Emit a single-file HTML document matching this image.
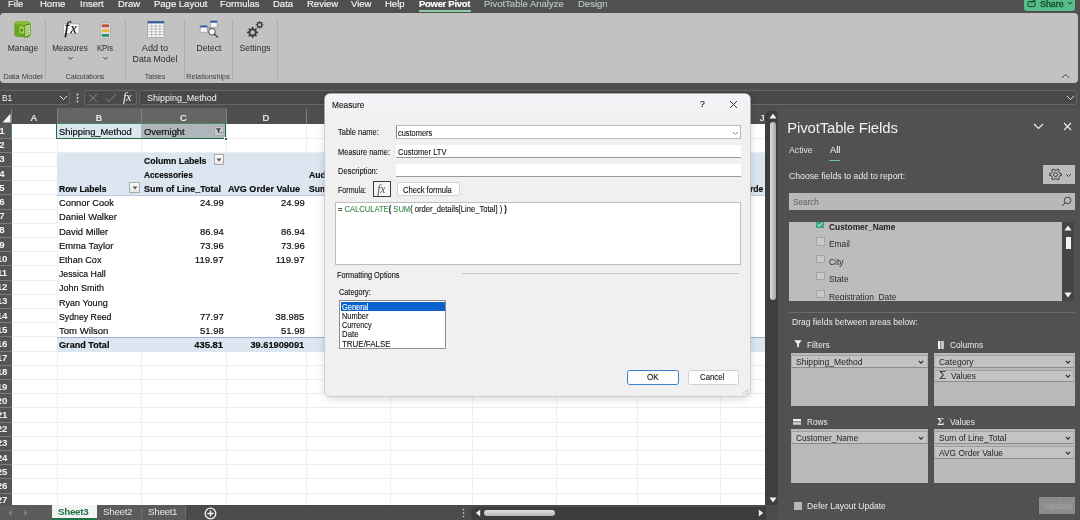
<!DOCTYPE html>
<html lang="en">
<head>
<meta charset="utf-8">
<title>Excel - Measure</title>
<style>
*{box-sizing:border-box;margin:0;padding:0}
html,body{width:1080px;height:520px;overflow:hidden;background:#4e4e4e;font-family:"Liberation Sans",sans-serif;}
#app{position:relative;width:1080px;height:520px;overflow:hidden;background:#4e4e4e;filter:blur(0.35px)}
.a{position:absolute;white-space:nowrap}
#menu{left:0;top:0;width:1080px;height:13px;background:#505050}
#menu span{position:absolute;top:-3.4px;font-size:9.5px;color:#f6f6f6;line-height:13px;-webkit-text-stroke-width:0.15px}
#ribbon{left:0;top:13px;width:1077.5px;height:70.2px;background:#c2c2c2;border-radius:4px}
.rl{font-size:8.8px;color:#2b2b2b;line-height:11px;text-align:center;transform:translateX(-50%)}
.rg{font-size:7.8px;color:#3a3a3a;line-height:10px;text-align:center;transform:translateX(-50%)}
.rsep{width:1px;background:#adadad;top:20px;height:60px}
#fbar{left:0;top:88px;width:1080px;height:20px;background:#4e4e4e}
#grid{left:0;top:108px;width:768px;height:397px;background:#fff;overflow:hidden}
#colhdr{left:0;top:0;width:768px;height:15.9px;background:#4f4f4f}
#rowhdr{left:0;top:15.5px;width:12px;height:382px;background:#545454}
.ch{top:2px;height:16px;line-height:16px;font-size:9.4px;-webkit-text-stroke-width:0.2px;color:#f6f6f6;text-align:center;transform:translateX(-50%)}
.rh{left:-6.6px;width:17px;font-size:9.7px;font-weight:bold;color:#f4f4f4;text-align:center;line-height:14px;padding-right:0;letter-spacing:-0.3px}
.vl{width:1px;background:#efefef;top:16px;height:382px}
.hl{height:1px;background:#ededed;left:12px;width:756px}
.c{font-size:9.8px;color:#0c0c0c;line-height:14px;-webkit-text-stroke-width:0.18px}
.b{font-weight:bold}
.r{text-align:right;transform:translateX(-100%)}
#dlg{left:325.3px;top:94px;width:424.6px;height:302px;background:#f0f0f0;border-radius:5px;box-shadow:0 0 0 0.7px #c8c8c8,0 2px 8px rgba(0,0,0,0.18)}
.d{font-size:9.2px;color:#141414;line-height:11px;-webkit-text-stroke-width:0.12px}
.inp{background:#fff;border:1px solid #c9c9c9;border-bottom-color:#8e8e8e;height:13px}
#pane{left:778px;top:108px;width:302px;height:412px;background:#515151}
.p{font-size:9.4px;color:#ececec;line-height:11px}
.box{background:#b9b9b9}
.fld{background:#bdbdbd;border:1px solid #9c9c9c;height:14px;font-size:8.6px;color:#222;line-height:12px;padding-left:3px}
</style>
</head>
<body>
<div id="app">
<div id="menu" class="a">
<span style="left:8px">File</span><span style="left:40px">Home</span><span style="left:80px">Insert</span><span style="left:118px">Draw</span><span style="left:154px">Page Layout</span><span style="left:220px">Formulas</span><span style="left:273px">Data</span><span style="left:307px">Review</span><span style="left:351px">View</span><span style="left:385px">Help</span><span style="left:419px;font-weight:bold;color:#fff;letter-spacing:-0.3px">Power Pivot</span><span style="left:484px;color:#b5c9bb">PivotTable Analyze</span><span style="left:578px;color:#b5c9bb">Design</span>
<div class="a" style="left:419px;top:10px;width:52px;height:1.5px;background:#8fd0a8"></div>
<div class="a" style="left:1024px;top:-2px;width:51px;height:13.1px;background:#58bd89;border-radius:0 0 3px 3px"></div>
<svg class="a" style="left:1027px;top:-0.6px" width="10" height="9" viewBox="0 0 10 9"><rect x="1" y="2.5" width="7" height="5" rx="1" fill="none" stroke="#12482a" stroke-width="1"/><path d="M4 4.5 L7.5 1 M5.5 0.8 H7.8 V3" fill="none" stroke="#12482a" stroke-width="1"/></svg>
<span style="left:1040px;top:-2.2px;color:#12482a;font-size:8.9px;-webkit-text-stroke-width:0.3px">Share</span>
<svg class="a" style="left:1067.3px;top:1.2px" width="6" height="4" viewBox="0 0 6 4"><path d="M0.8 0.8 L3 3 L5.2 0.8" fill="none" stroke="#12482a" stroke-width="1"/></svg>
</div>
<div id="ribbon" class="a">
<div class="a rsep" style="left:45px;top:6px;height:62px"></div>
<div class="a rsep" style="left:125px;top:6px;height:62px"></div>
<div class="a rsep" style="left:184px;top:6px;height:62px"></div>
<div class="a rsep" style="left:232px;top:6px;height:62px"></div>
<div class="a rsep" style="left:277px;top:6px;height:62px"></div>
<svg class="a" style="left:0;top:0" width="280" height="30" viewBox="0 13 280 30"><path d="M14.3 24 Q14.3 22 16.5 21.6 L26.5 21 Q29 21 30.5 23.6 L30.5 34.6 Q30.3 36.4 27.5 37.4 L25 37.6 L16 36.4 Q14.3 36 14.3 34.6Z" fill="#69a41f"/>
<path d="M14.5 23.6 Q15 21.8 16.5 21.6 L26.5 21 Q29 21 30.4 23.6 L24.6 25Z" fill="#86bd3a"/>
<path d="M24.6 25 L30.5 23.6 L30.5 34.6 Q30.3 36.4 27.5 37.4 L24.6 37.6Z" fill="#5a9419"/>
<path d="M25.4 26 L29.9 24.9 L29.9 34.2 L25.4 36.6Z" fill="#eaf6d2"/>
<path d="M26.9 25.6 V35.8 M28.4 25.2 V35 M25.4 28.7 L29.9 27.4 M25.4 31.3 L29.9 29.8 M25.4 33.9 L29.9 32.2" stroke="#6ea72a" stroke-width="0.6" fill="none"/>
<path d="M19.4 26.3 L24 26.8 V33.8 L19.4 33.2Z" fill="#a4d35c"/>
<path d="M20.6 28.6 L22.9 28.9 V31.8 L20.6 31.5Z" fill="#4f8a15"/>
<path d="M16.2 25 L19 25.3 M16.2 34.4 L19 34.8" stroke="#7fb935" stroke-width="0.6"/><rect x="63.3" y="24" width="15.6" height="9.6" fill="#fafafa" stroke="#8a8a8a" stroke-width="0.5"/>
<text x="64.6" y="33" font-family="Liberation Serif,serif" font-style="italic" font-size="17" fill="#151515" stroke="#151515" stroke-width="0.25">f</text>
<text x="70.4" y="32.8" font-family="Liberation Serif,serif" font-style="italic" font-size="14" fill="#151515" stroke="#151515" stroke-width="0.25">x</text><rect x="100.3" y="22.6" width="10.2" height="16" rx="1" fill="#d9d9d9" stroke="#9a9a9a" stroke-width="0.6"/>
<rect x="101.8" y="24.4" width="7.2" height="2.8" fill="#c9493f"/>
<rect x="101.8" y="29.2" width="7.2" height="2.8" fill="#eab644"/>
<rect x="101.8" y="34" width="7.2" height="2.8" fill="#2f8f6f"/><rect x="147.6" y="21.2" width="16.4" height="16.2" fill="#fbfbfb" stroke="#8f8f8f" stroke-width="0.6"/>
<rect x="147.6" y="21.2" width="16.4" height="2.2" fill="#2c5aa0"/>
<path d="M151.7 23.4 V37.4 M155.8 23.4 V37.4 M159.9 23.4 V37.4 M147.6 26.2 H164 M147.6 29 H164 M147.6 31.8 H164 M147.6 34.6 H164" stroke="#a6a6a6" stroke-width="0.7" fill="none"/><path d="M207.5 28 H210.5 V25" stroke="#6a6a6a" stroke-width="0.7" fill="none"/>
<rect x="200.2" y="25.6" width="7.2" height="6.8" rx="0.8" fill="#f4f4f4" stroke="#7d8aa0" stroke-width="0.6"/>
<rect x="200.2" y="25.6" width="7.2" height="1.8" fill="#2c5aa0"/>
<rect x="210.4" y="20.9" width="6.8" height="6.6" rx="0.8" fill="#f4f4f4" stroke="#7d8aa0" stroke-width="0.6"/>
<rect x="210.4" y="20.9" width="6.8" height="1.8" fill="#2c5aa0"/>
<circle cx="212" cy="31.8" r="3.3" fill="#fafafa" stroke="#3f3f3f" stroke-width="0.9"/>
<path d="M214.4 34.3 L217.6 37" stroke="#3f3f3f" stroke-width="1.3" stroke-linecap="round"/><path d="M256.72 31.58 L258.15 31.65 L258.15 33.15 L256.72 33.22 L256.09 34.73 L257.05 35.80 L256.00 36.85 L254.93 35.89 L253.42 36.52 L253.35 37.95 L251.85 37.95 L251.78 36.52 L250.27 35.89 L249.20 36.85 L248.15 35.80 L249.11 34.73 L248.48 33.22 L247.05 33.15 L247.05 31.65 L248.48 31.58 L249.11 30.07 L248.15 29.00 L249.20 27.95 L250.27 28.91 L251.78 28.28 L251.85 26.85 L253.35 26.85 L253.42 28.28 L254.93 28.91 L256.00 27.95 L257.05 29.00 L256.09 30.07Z M250.40 32.40 a2.20 2.20 0 1 0 4.40 0 a2.20 2.20 0 1 0 -4.40 0Z" fill="#3b3b3b" fill-rule="evenodd"/><path d="M262.44 24.23 L263.47 24.28 L263.47 25.32 L262.44 25.37 L262.01 26.41 L262.70 27.17 L261.97 27.90 L261.21 27.21 L260.17 27.64 L260.12 28.67 L259.08 28.67 L259.03 27.64 L257.99 27.21 L257.23 27.90 L256.50 27.17 L257.19 26.41 L256.76 25.37 L255.73 25.32 L255.73 24.28 L256.76 24.23 L257.19 23.19 L256.50 22.43 L257.23 21.70 L257.99 22.39 L259.03 21.96 L259.08 20.93 L260.12 20.93 L260.17 21.96 L261.21 22.39 L261.97 21.70 L262.70 22.43 L262.01 23.19Z M258.10 24.80 a1.50 1.50 0 1 0 3.00 0 a1.50 1.50 0 1 0 -3.00 0Z" fill="#3b3b3b" fill-rule="evenodd"/></svg>
<span class="a rl" style="left:23px;top:30px;transform:translateX(-50%) scaleX(0.962)">Manage</span>
<span class="a rl" style="left:70px;top:30px;transform:translateX(-50%) scaleX(0.922)">Measures</span>
<span class="a rl" style="left:105px;top:30px;transform:translateX(-50%) scaleX(0.867)">KPIs</span>
<span class="a rl" style="left:155px;top:30px;transform:translateX(-50%) scaleX(1.036)">Add to</span>
<span class="a rl" style="left:155px;top:41px;transform:translateX(-50%) scaleX(0.997)">Data Model</span>
<span class="a rl" style="left:209px;top:30px;transform:translateX(-50%) scaleX(0.977)">Detect</span>
<span class="a rl" style="left:255px;top:30px;transform:translateX(-50%) scaleX(0.978)">Settings</span>
<svg class="a" style="left:67px;top:43px" width="7" height="5" viewBox="0 0 7 5"><path d="M1.2 1.2 L3.5 3.4 L5.8 1.2" fill="none" stroke="#333" stroke-width="0.9"/></svg><svg class="a" style="left:102px;top:43px" width="7" height="5" viewBox="0 0 7 5"><path d="M1.2 1.2 L3.5 3.4 L5.8 1.2" fill="none" stroke="#333" stroke-width="0.9"/></svg>
<span class="a rg" style="left:23px;top:59.2px;transform:translateX(-50%) scaleX(0.993)">Data Model</span>
<span class="a rg" style="left:85px;top:59.2px;transform:translateX(-50%) scaleX(0.914)">Calculations</span>
<span class="a rg" style="left:155px;top:59.2px;transform:translateX(-50%) scaleX(0.914)">Tables</span>
<span class="a rg" style="left:208px;top:59.2px;transform:translateX(-50%) scaleX(0.931)">Relationships</span>
<svg class="a" style="left:1061px;top:60px" width="9" height="6" viewBox="0 0 9 6"><path d="M1 4.8 L4.5 1.3 L8 4.8" fill="none" stroke="#444" stroke-width="1"/></svg>
</div>
<div id="fbar" class="a">
<div class="a" style="left:-2px;top:1.5px;width:72px;height:15.6px;border:1px solid #666;border-radius:3px;background:#494949"></div>
<span class="a" style="left:2.4px;top:3.6px;font-size:9.8px;line-height:12px;color:#f4f4f4;transform-origin:0 50%;transform:scaleX(0.86)">B1</span>
<svg class="a" style="left:59px;top:7px" width="9" height="6" viewBox="0 0 9 6"><path d="M1 1 L4.5 4.5 L8 1" fill="none" stroke="#e8e8e8" stroke-width="1"/></svg>
<svg class="a" style="left:76px;top:5px" width="3" height="10" viewBox="0 0 3 10"><circle cx="1.5" cy="1.5" r="0.9" fill="#ddd"/><circle cx="1.5" cy="5" r="0.9" fill="#ddd"/><circle cx="1.5" cy="8.5" r="0.9" fill="#ddd"/></svg>
<div class="a" style="left:84px;top:1.5px;width:53px;height:15.6px;border:1px solid #666;border-radius:3px;background:#494949"></div>
<svg class="a" style="left:88px;top:5px" width="30" height="10" viewBox="0 0 30 10"><path d="M1 1 L9 9 M9 1 L1 9" stroke="#8a8a8a" stroke-width="0.9" fill="none"/><path d="M17.5 5.5 L20.8 8.8 L28 1.2" stroke="#8a8a8a" stroke-width="0.9" fill="none"/></svg>
<span class="a" style="left:123px;top:2px;font-family:'Liberation Serif',serif;font-style:italic;font-size:12.5px;line-height:14px;color:#f0f0f0;letter-spacing:-0.5px">fx</span>
<div class="a" style="left:139px;top:1.5px;width:938px;height:15.6px;border:1px solid #666;border-radius:3px;background:#494949"></div>
<span class="a" style="left:147px;top:3.6px;font-size:9.8px;line-height:12px;color:#f4f4f4;transform-origin:0 50%;transform:scaleX(0.915)">Shipping_Method</span>
<svg class="a" style="left:1066px;top:7px" width="9" height="6" viewBox="0 0 9 6"><path d="M1 1 L4.5 4.5 L8 1" fill="none" stroke="#ddd" stroke-width="1"/></svg>
</div>
<div id="grid" class="a">
<div class="a vl" style="left:57px"></div>
<div class="a vl" style="left:141px"></div>
<div class="a vl" style="left:226px"></div>
<div class="a vl" style="left:306px"></div>
<div class="a vl" style="left:390px"></div>
<div class="a vl" style="left:472px"></div>
<div class="a vl" style="left:556px"></div>
<div class="a vl" style="left:637px"></div>
<div class="a vl" style="left:720px"></div>
<div class="a hl" style="top:29.6px"></div>
<div class="a hl" style="top:43.8px"></div>
<div class="a hl" style="top:58.0px"></div>
<div class="a hl" style="top:72.2px"></div>
<div class="a hl" style="top:86.4px"></div>
<div class="a hl" style="top:100.6px"></div>
<div class="a hl" style="top:114.8px"></div>
<div class="a hl" style="top:129.0px"></div>
<div class="a hl" style="top:143.2px"></div>
<div class="a hl" style="top:157.4px"></div>
<div class="a hl" style="top:171.6px"></div>
<div class="a hl" style="top:185.8px"></div>
<div class="a hl" style="top:200.0px"></div>
<div class="a hl" style="top:214.2px"></div>
<div class="a hl" style="top:228.4px"></div>
<div class="a hl" style="top:242.6px"></div>
<div class="a hl" style="top:256.8px"></div>
<div class="a hl" style="top:271.0px"></div>
<div class="a hl" style="top:285.2px"></div>
<div class="a hl" style="top:299.4px"></div>
<div class="a hl" style="top:313.6px"></div>
<div class="a hl" style="top:327.8px"></div>
<div class="a hl" style="top:342.0px"></div>
<div class="a hl" style="top:356.2px"></div>
<div class="a hl" style="top:370.4px"></div>
<div class="a hl" style="top:384.6px"></div>
<div class="a hl" style="top:398.8px"></div>
<div class="a" style="left:57.5px;top:86.9px;width:711px;height:142.0px;background:#fff"></div>
<div class="a" style="left:57px;top:44.8px;width:711px;height:42.6px;background:#dce6f1"></div>
<div class="a" style="left:57px;top:228.9px;width:711px;height:14.7px;background:#dce6f1;border-top:1px solid #9ab3d5"></div>
<div class="a" style="left:57px;top:86.6px;width:711px;height:1px;background:#b9cbe3"></div>
<div class="a" style="left:57px;top:15.9px;width:84px;height:14.2px;background:#dce6f1"></div>
<div class="a" style="left:141px;top:15.9px;width:85px;height:14.2px;background:#aeb5bb"></div>
<div class="a" style="left:56px;top:15.0px;width:170.3px;height:15.6px;border:1.2px solid #1f6e45"></div>
<div class="a" style="left:223.8px;top:28.5px;width:4px;height:4px;background:#1b5e3b;border:0.6px solid #fff"></div>
<div id="colhdr" class="a"></div><div id="rowhdr" class="a"></div>
<div class="a" style="left:57px;top:0;width:169px;height:15.9px;background:#656565;border-bottom:1px solid #3f8a63"></div>
<div class="a" style="left:0;top:15.9px;width:12.2px;height:14.2px;background:#585858;border-right:1.5px solid #3f8a63"></div>
<div class="a" style="left:11px;top:1px;width:1px;height:14.5px;background:#808080"></div>
<div class="a" style="left:57px;top:1px;width:1px;height:14.5px;background:#808080"></div>
<div class="a" style="left:141px;top:1px;width:1px;height:14.5px;background:#808080"></div>
<div class="a" style="left:226px;top:1px;width:1px;height:14.5px;background:#808080"></div>
<div class="a" style="left:306px;top:1px;width:1px;height:14.5px;background:#808080"></div>
<div class="a" style="left:390px;top:1px;width:1px;height:14.5px;background:#808080"></div>
<div class="a" style="left:472px;top:1px;width:1px;height:14.5px;background:#808080"></div>
<div class="a" style="left:556px;top:1px;width:1px;height:14.5px;background:#808080"></div>
<div class="a" style="left:637px;top:1px;width:1px;height:14.5px;background:#808080"></div>
<div class="a" style="left:720px;top:1px;width:1px;height:14.5px;background:#808080"></div>
<span class="a ch" style="left:34.0px">A</span>
<span class="a ch" style="left:99.0px">B</span>
<span class="a ch" style="left:183.5px">C</span>
<span class="a ch" style="left:266.0px">D</span>
<span class="a ch" style="left:348.0px">E</span>
<span class="a ch" style="left:431.0px">F</span>
<span class="a ch" style="left:514.0px">G</span>
<span class="a ch" style="left:596.5px">H</span>
<span class="a ch" style="left:678.5px">I</span>
<span class="a ch" style="left:762.0px">J</span>
<span class="a rh" style="top:15.9px">1</span>
<div class="a" style="left:0;top:29.6px;width:12px;height:1px;background:#7c7c7c"></div>
<span class="a rh" style="top:30.1px">2</span>
<div class="a" style="left:0;top:43.8px;width:12px;height:1px;background:#7c7c7c"></div>
<span class="a rh" style="top:44.3px">3</span>
<div class="a" style="left:0;top:58.0px;width:12px;height:1px;background:#7c7c7c"></div>
<span class="a rh" style="top:58.5px">4</span>
<div class="a" style="left:0;top:72.2px;width:12px;height:1px;background:#7c7c7c"></div>
<span class="a rh" style="top:72.7px">5</span>
<div class="a" style="left:0;top:86.4px;width:12px;height:1px;background:#7c7c7c"></div>
<span class="a rh" style="top:86.9px">6</span>
<div class="a" style="left:0;top:100.6px;width:12px;height:1px;background:#7c7c7c"></div>
<span class="a rh" style="top:101.1px">7</span>
<div class="a" style="left:0;top:114.8px;width:12px;height:1px;background:#7c7c7c"></div>
<span class="a rh" style="top:115.3px">8</span>
<div class="a" style="left:0;top:129.0px;width:12px;height:1px;background:#7c7c7c"></div>
<span class="a rh" style="top:129.5px">9</span>
<div class="a" style="left:0;top:143.2px;width:12px;height:1px;background:#7c7c7c"></div>
<span class="a rh" style="top:143.7px">10</span>
<div class="a" style="left:0;top:157.4px;width:12px;height:1px;background:#7c7c7c"></div>
<span class="a rh" style="top:157.9px">11</span>
<div class="a" style="left:0;top:171.6px;width:12px;height:1px;background:#7c7c7c"></div>
<span class="a rh" style="top:172.1px">12</span>
<div class="a" style="left:0;top:185.8px;width:12px;height:1px;background:#7c7c7c"></div>
<span class="a rh" style="top:186.3px">13</span>
<div class="a" style="left:0;top:200.0px;width:12px;height:1px;background:#7c7c7c"></div>
<span class="a rh" style="top:200.5px">14</span>
<div class="a" style="left:0;top:214.2px;width:12px;height:1px;background:#7c7c7c"></div>
<span class="a rh" style="top:214.7px">15</span>
<div class="a" style="left:0;top:228.4px;width:12px;height:1px;background:#7c7c7c"></div>
<span class="a rh" style="top:228.9px">16</span>
<div class="a" style="left:0;top:242.6px;width:12px;height:1px;background:#7c7c7c"></div>
<span class="a rh" style="top:243.1px">17</span>
<div class="a" style="left:0;top:256.8px;width:12px;height:1px;background:#7c7c7c"></div>
<span class="a rh" style="top:257.3px">18</span>
<div class="a" style="left:0;top:271.0px;width:12px;height:1px;background:#7c7c7c"></div>
<span class="a rh" style="top:271.5px">19</span>
<div class="a" style="left:0;top:285.2px;width:12px;height:1px;background:#7c7c7c"></div>
<span class="a rh" style="top:285.7px">20</span>
<div class="a" style="left:0;top:299.4px;width:12px;height:1px;background:#7c7c7c"></div>
<span class="a rh" style="top:299.9px">21</span>
<div class="a" style="left:0;top:313.6px;width:12px;height:1px;background:#7c7c7c"></div>
<span class="a rh" style="top:314.1px">22</span>
<div class="a" style="left:0;top:327.8px;width:12px;height:1px;background:#7c7c7c"></div>
<span class="a rh" style="top:328.3px">23</span>
<div class="a" style="left:0;top:342.0px;width:12px;height:1px;background:#7c7c7c"></div>
<span class="a rh" style="top:342.5px">24</span>
<div class="a" style="left:0;top:356.2px;width:12px;height:1px;background:#7c7c7c"></div>
<span class="a rh" style="top:356.7px">25</span>
<div class="a" style="left:0;top:370.4px;width:12px;height:1px;background:#7c7c7c"></div>
<span class="a rh" style="top:370.9px">26</span>
<div class="a" style="left:0;top:384.6px;width:12px;height:1px;background:#7c7c7c"></div>
<span class="a rh" style="top:385.1px">27</span>
<div class="a" style="left:0;top:398.8px;width:12px;height:1px;background:#7c7c7c"></div>
<span class="a rh" style="top:399.3px">28</span>
<div class="a" style="left:0;top:413.0px;width:12px;height:1px;background:#7c7c7c"></div>
<svg class="a" style="left:2px;top:5px" width="9" height="10" viewBox="0 0 9 10"><path d="M8.5 0.5 V9.5 H0.5Z" fill="#f5f5f5"/></svg>
<span class="a c " style="left:59.0px;top:17.2px;font-size:9.9px;transform-origin:0 50%;transform:scaleX(0.946)">Shipping_Method</span>
<span class="a c " style="left:143.5px;top:17.2px;font-size:9.9px;transform-origin:0 50%;transform:scaleX(0.950)">Overnight</span>
<span class="a c b" style="left:143.5px;top:45.6px;font-size:9.8px;transform-origin:0 50%;transform:scaleX(0.889)">Column Labels</span>
<span class="a c b" style="left:143.5px;top:59.8px;font-size:9.8px;transform-origin:0 50%;transform:scaleX(0.844)">Accessories</span>
<span class="a c b" style="left:59.0px;top:74.0px;font-size:9.8px;transform-origin:0 50%;transform:scaleX(0.871)">Row Labels</span>
<span class="a c b" style="left:143.5px;top:74.0px;font-size:9.8px;transform-origin:0 50%;transform:scaleX(0.914)">Sum of Line_Total</span>
<span class="a c b" style="left:228.0px;top:74.0px;font-size:9.8px;transform-origin:0 50%;transform:scaleX(0.920)">AVG Order Value</span>
<span class="a c b" style="left:308.5px;top:59.8px;font-size:9.8px;transform-origin:0 50%;transform:scaleX(0.880)">Aud</span>
<span class="a c b" style="left:308.5px;top:74.0px;font-size:9.8px;transform-origin:0 50%;transform:scaleX(0.880)">Sum</span>
<span class="a c b" style="left:750.0px;top:74.0px;font-size:9.8px;transform-origin:0 50%;transform:scaleX(0.880)">rde</span>
<span class="a c " style="left:59.0px;top:88.2px;font-size:9.9px;transform-origin:0 50%;transform:scaleX(0.944)">Connor Cook</span>
<span class="a c " style="right:544.7px;top:88.2px;font-size:9.9px;transform-origin:100% 50%;transform:scaleX(0.959)">24.99</span>
<span class="a c " style="right:463.5px;top:88.2px;font-size:9.9px;transform-origin:100% 50%;transform:scaleX(0.959)">24.99</span>
<span class="a c " style="left:59.0px;top:102.4px;font-size:9.9px;transform-origin:0 50%;transform:scaleX(0.948)">Daniel Walker</span>
<span class="a c " style="left:59.0px;top:116.6px;font-size:9.9px;transform-origin:0 50%;transform:scaleX(0.954)">David Miller</span>
<span class="a c " style="right:544.7px;top:116.6px;font-size:9.9px;transform-origin:100% 50%;transform:scaleX(0.959)">86.94</span>
<span class="a c " style="right:463.5px;top:116.6px;font-size:9.9px;transform-origin:100% 50%;transform:scaleX(0.959)">86.94</span>
<span class="a c " style="left:59.0px;top:130.8px;font-size:9.9px;transform-origin:0 50%;transform:scaleX(0.948)">Emma Taylor</span>
<span class="a c " style="right:544.7px;top:130.8px;font-size:9.9px;transform-origin:100% 50%;transform:scaleX(0.959)">73.96</span>
<span class="a c " style="right:463.5px;top:130.8px;font-size:9.9px;transform-origin:100% 50%;transform:scaleX(0.959)">73.96</span>
<span class="a c " style="left:59.0px;top:145.0px;font-size:9.9px;transform-origin:0 50%;transform:scaleX(0.920)">Ethan Cox</span>
<span class="a c " style="right:544.7px;top:145.0px;font-size:9.9px;transform-origin:100% 50%;transform:scaleX(0.973)">119.97</span>
<span class="a c " style="right:463.5px;top:145.0px;font-size:9.9px;transform-origin:100% 50%;transform:scaleX(0.973)">119.97</span>
<span class="a c " style="left:59.0px;top:159.2px;font-size:9.9px;transform-origin:0 50%;transform:scaleX(0.886)">Jessica Hall</span>
<span class="a c " style="left:59.0px;top:173.4px;font-size:9.9px;transform-origin:0 50%;transform:scaleX(0.910)">John Smith</span>
<span class="a c " style="left:59.0px;top:187.6px;font-size:9.9px;transform-origin:0 50%;transform:scaleX(0.914)">Ryan Young</span>
<span class="a c " style="left:59.0px;top:201.8px;font-size:9.9px;transform-origin:0 50%;transform:scaleX(0.885)">Sydney Reed</span>
<span class="a c " style="right:544.7px;top:201.8px;font-size:9.9px;transform-origin:100% 50%;transform:scaleX(0.959)">77.97</span>
<span class="a c " style="right:463.5px;top:201.8px;font-size:9.9px;transform-origin:100% 50%;transform:scaleX(0.950)">38.985</span>
<span class="a c " style="left:59.0px;top:216.0px;font-size:9.9px;transform-origin:0 50%;transform:scaleX(0.969)">Tom Wilson</span>
<span class="a c " style="right:544.7px;top:216.0px;font-size:9.9px;transform-origin:100% 50%;transform:scaleX(0.959)">51.98</span>
<span class="a c " style="right:463.5px;top:216.0px;font-size:9.9px;transform-origin:100% 50%;transform:scaleX(0.959)">51.98</span>
<span class="a c b" style="left:59.0px;top:230.2px;font-size:9.8px;transform-origin:0 50%;transform:scaleX(0.930)">Grand Total</span>
<span class="a c b" style="right:544.7px;top:230.2px;font-size:9.8px;transform-origin:100% 50%;transform:scaleX(0.958)">435.81</span>
<span class="a c b" style="right:463.5px;top:230.2px;font-size:9.8px;transform-origin:100% 50%;transform:scaleX(0.939)">39.61909091</span>
<div class="a" style="left:213.6px;top:17.6px;width:10.5px;height:10.5px;background:#c9cdd1;border:0.7px solid #a9a9a9"></div><svg class="a" style="left:215.1px;top:19.1px" width="8" height="8" viewBox="0 0 8 8"><path d="M0.8 1.2 H6.2 L4.2 3.6 V6.6 L2.8 5.6 V3.6Z" fill="#444"/><path d="M5.2 5.2 L6.3 6.4 L7.4 5.2Z" fill="#444"/></svg>
<div class="a" style="left:213.6px;top:46.0px;width:10.5px;height:10.5px;background:linear-gradient(#fdfdfd,#e6e6e6);border:0.7px solid #a9a9a9"></div><svg class="a" style="left:215.9px;top:49.8px" width="6" height="4" viewBox="0 0 6 4"><path d="M0.6 0.6 H5.4 L3 3.4Z" fill="#555"/></svg>
<div class="a" style="left:129.2px;top:74.4px;width:10.5px;height:10.5px;background:linear-gradient(#fdfdfd,#e6e6e6);border:0.7px solid #a9a9a9"></div><svg class="a" style="left:131.5px;top:78.2px" width="6" height="4" viewBox="0 0 6 4"><path d="M0.6 0.6 H5.4 L3 3.4Z" fill="#555"/></svg>
</div>
<div class="a" style="left:765px;top:110.5px;width:14px;height:396px;background:#3e3e3e;border-radius:5px 5px 0 0"></div>
<div class="a" style="left:769.6px;top:122.3px;width:6.2px;height:178px;background:linear-gradient(90deg,#dcdcdc,#c2c2c2 50%,#a8a8a8);border-radius:3px"></div>
<svg class="a" style="left:768.6px;top:113.4px" width="8" height="6" viewBox="0 0 8 6"><path d="M4 0.6 L7.6 5.4 H0.4Z" fill="#f0f0f0"/></svg>
<svg class="a" style="left:768.6px;top:497px" width="8" height="6" viewBox="0 0 8 6"><path d="M4 5.4 L7.6 0.6 H0.4Z" fill="#f0f0f0"/></svg>
<div class="a" style="left:0;top:505.3px;width:780px;height:15px;background:#4b4b4b"></div>
<div class="a" style="left:0;top:505.3px;width:186px;height:15px;background:#5b5b5b"></div>
<svg class="a" style="left:7px;top:509px" width="24" height="8" viewBox="0 0 24 8"><path d="M4.5 1 L1.5 4 L4.5 7Z M17.5 1 L20.5 4 L17.5 7Z" fill="#868686"/></svg>
<div class="a" style="left:52px;top:505px;width:45px;height:15px;background:#f3f3f3;border-bottom:2px solid #1f7246"></div>
<span class="a" style="left:58px;top:506px;font-size:9.8px;line-height:12px;font-weight:bold;color:#1f7246;letter-spacing:-0.3px">Sheet3</span>
<span class="a" style="left:103px;top:506px;font-size:9.8px;line-height:12px;color:#e6e6e6;letter-spacing:-0.3px">Sheet2</span>
<span class="a" style="left:148px;top:506px;font-size:9.8px;line-height:12px;color:#e6e6e6;letter-spacing:-0.3px">Sheet1</span>
<div class="a" style="left:141px;top:507px;width:1px;height:11px;background:#6f6f6f"></div>
<div class="a" style="left:185px;top:507px;width:1px;height:11px;background:#6f6f6f"></div>
<svg class="a" style="left:204px;top:507px" width="13" height="13" viewBox="0 0 13 13"><circle cx="6.5" cy="6.5" r="5.3" fill="none" stroke="#f4f4f4" stroke-width="1.3"/><path d="M6.5 3.4 V9.6 M3.4 6.5 H9.6" stroke="#f4f4f4" stroke-width="1.4"/></svg>
<div class="a" style="left:471px;top:506.5px;width:295px;height:14px;background:#3d3d3d;border-radius:6px 0 0 6px"></div>
<svg class="a" style="left:462px;top:508px" width="3" height="10" viewBox="0 0 3 10"><circle cx="1.5" cy="1.5" r="0.8" fill="#ddd"/><circle cx="1.5" cy="5" r="0.8" fill="#ddd"/><circle cx="1.5" cy="8.5" r="0.8" fill="#ddd"/></svg>
<svg class="a" style="left:475px;top:509.2px" width="6" height="8" viewBox="0 0 6 8"><path d="M5.2 0.6 L0.8 4 L5.2 7.4Z" fill="#eee"/></svg>
<div class="a" style="left:483.5px;top:509.8px;width:71.5px;height:6.2px;background:linear-gradient(#dedede,#b8b8b8);border-radius:3.1px"></div>
<svg class="a" style="left:757.5px;top:509.2px" width="6" height="8" viewBox="0 0 6 8"><path d="M0.8 0.6 L5.2 4 L0.8 7.4Z" fill="#eee"/></svg>
<div id="dlg" class="a">
<div class="a" style="left:0;top:0;width:424.6px;height:24px;background:linear-gradient(#f3f5f9,#f0f0f0);border-radius:5px 5px 0 0"></div>
<span class="a d" style="left:6.6px;top:5.6px;transform-origin:0 50%;transform:scaleX(0.903);">Measure</span>
<span class="a d" style="left:374.5px;top:5.0px;transform-origin:0 50%;transform:scaleX(1.000);">?</span>
<svg class="a" style="left:403.6px;top:6.3px" width="9" height="9" viewBox="0 0 9 9"><path d="M1 1 L8 8 M8 1 L1 8" stroke="#222" stroke-width="0.9" fill="none"/></svg>
<span class="a d" style="left:12.3px;top:33.3px;transform-origin:0 50%;transform:scaleX(0.815);">Table name:</span>
<span class="a d" style="left:12.3px;top:52.8px;transform-origin:0 50%;transform:scaleX(0.814);">Measure name:</span>
<span class="a d" style="left:12.3px;top:71.5px;transform-origin:0 50%;transform:scaleX(0.822);">Description:</span>
<span class="a d" style="left:12.3px;top:90.5px;transform-origin:0 50%;transform:scaleX(0.775);">Formula:</span>
<div class="a" style="left:70.5px;top:31.0px;width:345.5px;height:14.4px;background:#fff;border:1px solid #b9b9b9;border-left-color:#8a8a8a;border-radius:1px"></div>
<svg class="a" style="left:406.5px;top:36.5px" width="7" height="5" viewBox="0 0 7 5"><path d="M1 1 L3.5 3.5 L6 1" fill="none" stroke="#666" stroke-width="0.8"/></svg>
<span class="a d" style="left:73.0px;top:33.5px;transform-origin:0 50%;transform:scaleX(0.807);">customers</span>
<div class="a" style="left:71.0px;top:50.5px;width:345px;height:13.6px;background:#fff;border-bottom:1px solid #9a9a9a"></div>
<span class="a d" style="left:73.0px;top:52.5px;transform-origin:0 50%;transform:scaleX(0.830);">Customer LTV</span>
<div class="a" style="left:71.0px;top:69.6px;width:345px;height:13px;background:#fff;border-bottom:1px solid #9a9a9a"></div>
<div class="a" style="left:47.5px;top:87.0px;width:18.5px;height:16px;background:#f6f6f6;border:1.2px solid #3a3a3a"></div>
<span class="a" style="left:52.0px;top:88.0px;font-family:'Liberation Serif',serif;font-style:italic;font-size:11.5px;line-height:14px;color:#555;letter-spacing:-0.3px">fx</span>
<div class="a" style="left:71.6px;top:88.4px;width:63px;height:14px;background:#fdfdfd;border:1px solid #d2d2d2;border-radius:2px"></div>
<span class="a d" style="left:77.5px;top:90.6px;transform-origin:0 50%;transform:scaleX(0.824);">Check formula</span>
<div class="a" style="left:10.2px;top:108.3px;width:406px;height:62.5px;background:#fff;border:1px solid #bdbdbd"></div>
<span class="a d" style="left:13.0px;top:110.3px;transform-origin:0 50%;transform:scaleX(0.826);">= <span style="color:#3e8a4d">CALCULATE</span><b style="color:#1c2340">(</b> <span style="color:#3e8a4d">SUM</span>( order_details[Line_Total] ) <b>)</b></span>
<span class="a d" style="left:12.0px;top:176.0px;transform-origin:0 50%;transform:scaleX(0.799);">Formatting Options</span>
<div class="a" style="left:136.7px;top:179.2px;width:277px;height:1px;background:#c4c4c4"></div>
<span class="a d" style="left:14.0px;top:193.0px;transform-origin:0 50%;transform:scaleX(0.796);">Category:</span>
<div class="a" style="left:14.0px;top:206.2px;width:107px;height:49px;background:#fff;border:1px solid #8d8d8d"></div>
<div class="a" style="left:15.3px;top:207.5px;width:104.4px;height:9px;background:#0a62cf"></div>
<span class="a d" style="left:16.8px;top:207.6px;transform-origin:0 50%;transform:scaleX(0.808);color:#fff">General</span>
<span class="a d" style="left:16.8px;top:216.9px;transform-origin:0 50%;transform:scaleX(0.808);">Number</span>
<span class="a d" style="left:16.8px;top:226.1px;transform-origin:0 50%;transform:scaleX(0.794);">Currency</span>
<span class="a d" style="left:16.8px;top:235.4px;transform-origin:0 50%;transform:scaleX(0.850);">Date</span>
<span class="a d" style="left:16.8px;top:244.6px;transform-origin:0 50%;transform:scaleX(0.865);">TRUE/FALSE</span>
<div class="a" style="left:302.2px;top:276.0px;width:51.4px;height:14.8px;background:#fdfdfd;border:1.2px solid #3a7fd0;border-radius:2.5px"></div>
<div class="a" style="left:362.6px;top:276.0px;width:50.8px;height:14.8px;background:#fdfdfd;border:1px solid #d0d0d0;border-radius:2.5px"></div>
<span class="a d" style="left:321.8px;top:278.1px;transform-origin:0 50%;transform:scaleX(0.873);">OK</span>
<span class="a d" style="left:374.5px;top:278.1px;transform-origin:0 50%;transform:scaleX(0.849);">Cancel</span>
<svg class="a" style="left:418.0px;top:294.5px" width="6" height="6" viewBox="0 0 6 6"><g fill="#bcbcbc"><rect x="4" y="0" width="1.2" height="1.2"/><rect x="2" y="2" width="1.2" height="1.2"/><rect x="4" y="2" width="1.2" height="1.2"/><rect x="0" y="4" width="1.2" height="1.2"/><rect x="2" y="4" width="1.2" height="1.2"/><rect x="4" y="4" width="1.2" height="1.2"/></g></svg>
</div>
<div id="pane" class="a">
<span class="a" style="left:9.2px;top:10.6px;font-size:14.9px;line-height:18px;color:#f1f1f1;letter-spacing:-0.12px">PivotTable Fields</span>
<svg class="a" style="left:254.5px;top:15.0px" width="11" height="7" viewBox="0 0 11 7"><path d="M1 1 L5.5 5.5 L10 1" fill="none" stroke="#f0f0f0" stroke-width="1.1"/></svg>
<svg class="a" style="left:285.0px;top:13.5px" width="9" height="9" viewBox="0 0 9 9"><path d="M1 1 L8 8 M8 1 L1 8" stroke="#f0f0f0" stroke-width="1.1" fill="none"/></svg>
<span class="a p" style="left:10.7px;top:35.8px;transform-origin:0 50%;transform:scaleX(0.928);color:#e0e0e0">Active</span>
<span class="a p" style="left:51.6px;top:35.8px;transform-origin:0 50%;transform:scaleX(0.998);color:#fff">All</span>
<div class="a" style="left:50.7px;top:51.6px;width:11.3px;height:1.6px;background:#63c9a6;border-radius:1px"></div>
<span class="a p" style="left:11.0px;top:61.6px;transform-origin:0 50%;transform:scaleX(0.925);">Choose fields to add to report:</span>
<div class="a" style="left:265.0px;top:57.0px;width:31.7px;height:19.0px;background:#bcbcbc;"></div>
<svg class="a" style="left:270.5px;top:59.8px" width="13" height="13" viewBox="0 0 13 13"><path d="M10.75 5.36 L12.31 5.46 L12.31 7.54 L10.75 7.64 L9.61 9.61 L10.31 11.01 L8.50 12.05 L7.64 10.75 L5.36 10.75 L4.50 12.05 L2.69 11.01 L3.39 9.61 L2.25 7.64 L0.69 7.54 L0.69 5.46 L2.25 5.36 L3.39 3.39 L2.69 1.99 L4.50 0.95 L5.36 2.25 L7.64 2.25 L8.50 0.95 L10.31 1.99 L9.61 3.39Z M4.50 6.50 a2.00 2.00 0 1 0 4.00 0 a2.00 2.00 0 1 0 -4.00 0Z" fill="none" stroke="#2c2c2c" stroke-width="0.9" stroke-linejoin="round" fill-rule="evenodd"/></svg>
<svg class="a" style="left:287.0px;top:65.0px" width="7" height="5" viewBox="0 0 7 5"><path d="M1 1 L3.5 3.5 L6 1" fill="none" stroke="#333" stroke-width="0.9"/></svg>
<div class="a" style="left:10.7px;top:85.3px;width:286.0px;height:16.3px;background:#b8b8b8;"></div>
<span class="a p" style="left:15.0px;top:87.8px;transform-origin:0 50%;transform:scaleX(0.868);color:#5e5e5e">Search</span>
<svg class="a" style="left:283.0px;top:88.3px" width="11" height="11" viewBox="0 0 11 11"><circle cx="6.6" cy="4.4" r="3.3" fill="none" stroke="#333" stroke-width="0.9"/><path d="M4.2 6.8 L1 10" stroke="#333" stroke-width="1"/></svg>
<div class="a" style="left:10.7px;top:114.2px;width:273.3px;height:78.6px;background:#bcbcbc;"></div>
<div class="a" style="left:284.0px;top:114.2px;width:12.2px;height:78.6px;background:#454545;"></div>
<svg class="a" style="left:286.3px;top:117.2px" width="8" height="6" viewBox="0 0 8 6"><path d="M4 0.6 L7.6 5.4 H0.4Z" fill="#f4f4f4"/></svg>
<svg class="a" style="left:286.3px;top:183.5px" width="8" height="6" viewBox="0 0 8 6"><path d="M4 5.4 L7.6 0.6 H0.4Z" fill="#f4f4f4"/></svg>
<div class="a" style="left:287.6px;top:129.0px;width:5.4px;height:12.4px;background:#f2f2f2;"></div>
<div class="a" style="left:10.7px;top:114.2px;width:273.3px;height:78.2px;overflow:hidden">
<div class="a" style="left:27.6px;top:-2.2px;width:8px;height:8px;background:#3aa878"></div>
<svg class="a" style="left:28.6px;top:-0.5px" width="6" height="5" viewBox="0 0 6 5"><path d="M0.7 2.6 L2.3 4.1 L5.3 0.8" fill="none" stroke="#fff" stroke-width="1"/></svg>
<span class="a p" style="left:40.3px;top:-1.6px;color:#1b1b1b;font-weight:bold;transform-origin:0 50%;transform:scaleX(0.891)">Customer_Name</span>
<div class="a" style="left:27.6px;top:15.0px;width:8.6px;height:8.6px;background:#c9c9c9;border:0.8px solid #a2a2a2"></div>
<span class="a p" style="left:40.3px;top:15.9px;color:#2a2a2a;transform-origin:0 50%;transform:scaleX(0.895)">Email</span>
<div class="a" style="left:27.6px;top:32.5px;width:8.6px;height:8.6px;background:#c9c9c9;border:0.8px solid #a2a2a2"></div>
<span class="a p" style="left:40.3px;top:33.4px;color:#2a2a2a;transform-origin:0 50%;transform:scaleX(0.897)">City</span>
<div class="a" style="left:27.6px;top:49.7px;width:8.6px;height:8.6px;background:#c9c9c9;border:0.8px solid #a2a2a2"></div>
<span class="a p" style="left:40.3px;top:50.6px;color:#2a2a2a;transform-origin:0 50%;transform:scaleX(0.895)">State</span>
<div class="a" style="left:27.6px;top:67.5px;width:8.6px;height:8.6px;background:#c9c9c9;border:0.8px solid #a2a2a2"></div>
<span class="a p" style="left:40.3px;top:68.4px;color:#2a2a2a;transform-origin:0 50%;transform:scaleX(0.897)">Registration_Date</span>
</div>
<div class="a" style="left:11.0px;top:203.5px;width:286.0px;height:1.0px;background:#6b6b6b;"></div>
<span class="a p" style="left:13.7px;top:208.0px;transform-origin:0 50%;transform:scaleX(0.908);">Drag fields between areas below:</span>
<svg class="a" style="left:15.9px;top:232.3px" width="8" height="8" viewBox="0 0 8 8"><path d="M0.2 0.3 H7.8 L4.9 3.8 V7.6 L3.1 6.4 V3.8Z" fill="#f2f2f2"/></svg>
<span class="a p" style="left:28.5px;top:230.5px;transform-origin:0 50%;transform:scaleX(0.893);">Filters</span>
<svg class="a" style="left:159.8px;top:232.5px" width="6" height="8" viewBox="0 0 6 8"><rect x="0" y="0" width="2.4" height="8" fill="#f2f2f2"/><rect x="3.2" y="0" width="2.6" height="8" fill="#cfcfcf"/></svg>
<span class="a p" style="left:171.6px;top:230.5px;transform-origin:0 50%;transform:scaleX(0.897);">Columns</span>
<svg class="a" style="left:15.3px;top:310.5px" width="8" height="6" viewBox="0 0 8 6"><rect x="0" y="0" width="8" height="2.4" fill="#f2f2f2"/><rect x="0" y="3.2" width="8" height="2.6" fill="#cfcfcf"/></svg>
<span class="a p" style="left:28.5px;top:307.9px;transform-origin:0 50%;transform:scaleX(0.883);">Rows</span>
<span class="a p" style="left:159.2px;top:308.1px;transform-origin:0 50%;transform:scaleX(1.000);font-weight:bold;font-family:'Liberation Serif',serif;font-size:10.5px">&Sigma;</span>
<span class="a p" style="left:171.6px;top:307.9px;transform-origin:0 50%;transform:scaleX(0.890);">Values</span>
<div class="a" style="left:12.5px;top:245.3px;width:137.8px;height:52.7px;background:#b9b9b9;"></div>
<div class="a" style="left:156.0px;top:245.3px;width:140.7px;height:52.7px;background:#b9b9b9;"></div>
<div class="a" style="left:12.5px;top:321.3px;width:137.8px;height:53.3px;background:#b9b9b9;"></div>
<div class="a" style="left:156.0px;top:321.3px;width:140.7px;height:53.3px;background:#b9b9b9;"></div>
<div class="a" style="left:12.8px;top:246.8px;width:137.2px;height:12.9px;background:#c3c3c3;border-top:1px solid #a0a0a0;border-bottom:1px solid #8b8b8b;border-left:0.6px solid #adadad;border-right:0.6px solid #adadad"></div><span class="a p" style="left:17.5px;top:247.6px;transform-origin:0 50%;transform:scaleX(0.913);color:#222">Shipping_Method</span><svg class="a" style="left:140.3px;top:251.6px" width="6" height="4.4" viewBox="0 0 6 4.4"><path d="M0.8 0.9 L3 3.2 L5.2 0.9" fill="none" stroke="#2e2e2e" stroke-width="1.05"/></svg>
<div class="a" style="left:156.3px;top:246.8px;width:140.1px;height:12.9px;background:#c3c3c3;border-top:1px solid #a0a0a0;border-bottom:1px solid #8b8b8b;border-left:0.6px solid #adadad;border-right:0.6px solid #adadad"></div><span class="a p" style="left:161.0px;top:247.6px;transform-origin:0 50%;transform:scaleX(0.904);color:#222">Category</span><svg class="a" style="left:286.7px;top:251.6px" width="6" height="4.4" viewBox="0 0 6 4.4"><path d="M0.8 0.9 L3 3.2 L5.2 0.9" fill="none" stroke="#2e2e2e" stroke-width="1.05"/></svg>
<div class="a" style="left:156.3px;top:261.6px;width:140.1px;height:12.9px;background:#c3c3c3;border-top:1px solid #a0a0a0;border-bottom:1px solid #8b8b8b;border-left:0.6px solid #adadad;border-right:0.6px solid #adadad"></div><span class="a p" style="left:161.2px;top:262.2px;transform-origin:0 50%;transform:scaleX(1.000);color:#2a2a2a;font-size:11.5px">&Sigma;</span><span class="a p" style="left:173.0px;top:262.2px;transform-origin:0 50%;transform:scaleX(0.890);color:#222">Values</span><svg class="a" style="left:286.7px;top:266.4px" width="6" height="4.4" viewBox="0 0 6 4.4"><path d="M0.8 0.9 L3 3.2 L5.2 0.9" fill="none" stroke="#2e2e2e" stroke-width="1.05"/></svg>
<div class="a" style="left:12.8px;top:323.3px;width:137.2px;height:12.9px;background:#c3c3c3;border-top:1px solid #a0a0a0;border-bottom:1px solid #8b8b8b;border-left:0.6px solid #adadad;border-right:0.6px solid #adadad"></div><span class="a p" style="left:17.5px;top:324.1px;transform-origin:0 50%;transform:scaleX(0.878);color:#222">Customer_Name</span><svg class="a" style="left:140.3px;top:328.1px" width="6" height="4.4" viewBox="0 0 6 4.4"><path d="M0.8 0.9 L3 3.2 L5.2 0.9" fill="none" stroke="#2e2e2e" stroke-width="1.05"/></svg>
<div class="a" style="left:156.3px;top:323.3px;width:140.1px;height:12.9px;background:#c3c3c3;border-top:1px solid #a0a0a0;border-bottom:1px solid #8b8b8b;border-left:0.6px solid #adadad;border-right:0.6px solid #adadad"></div><span class="a p" style="left:161.0px;top:324.1px;transform-origin:0 50%;transform:scaleX(0.897);color:#222">Sum of Line_Total</span><svg class="a" style="left:286.7px;top:328.1px" width="6" height="4.4" viewBox="0 0 6 4.4"><path d="M0.8 0.9 L3 3.2 L5.2 0.9" fill="none" stroke="#2e2e2e" stroke-width="1.05"/></svg>
<div class="a" style="left:156.3px;top:338.1px;width:140.1px;height:12.9px;background:#c3c3c3;border-top:1px solid #a0a0a0;border-bottom:1px solid #8b8b8b;border-left:0.6px solid #adadad;border-right:0.6px solid #adadad"></div><span class="a p" style="left:161.0px;top:338.9px;transform-origin:0 50%;transform:scaleX(0.894);color:#222">AVG Order Value</span><svg class="a" style="left:286.7px;top:342.9px" width="6" height="4.4" viewBox="0 0 6 4.4"><path d="M0.8 0.9 L3 3.2 L5.2 0.9" fill="none" stroke="#2e2e2e" stroke-width="1.05"/></svg>
<div class="a" style="left:15.5px;top:393.9px;width:8.5px;height:8.1px;background:#b6b6b6;"></div>
<span class="a p" style="left:28.8px;top:392.2px;transform-origin:0 50%;transform:scaleX(0.911);">Defer Layout Update</span>
<div class="a" style="left:261.0px;top:388.8px;width:35.7px;height:17.5px;background:#8d8d8d;"></div>
<span class="a p" style="left:266.5px;top:392.0px;transform-origin:0 50%;transform:scaleX(0.903);color:#a8a8a8">Update</span>
</div>
</div>
</body>
</html>
